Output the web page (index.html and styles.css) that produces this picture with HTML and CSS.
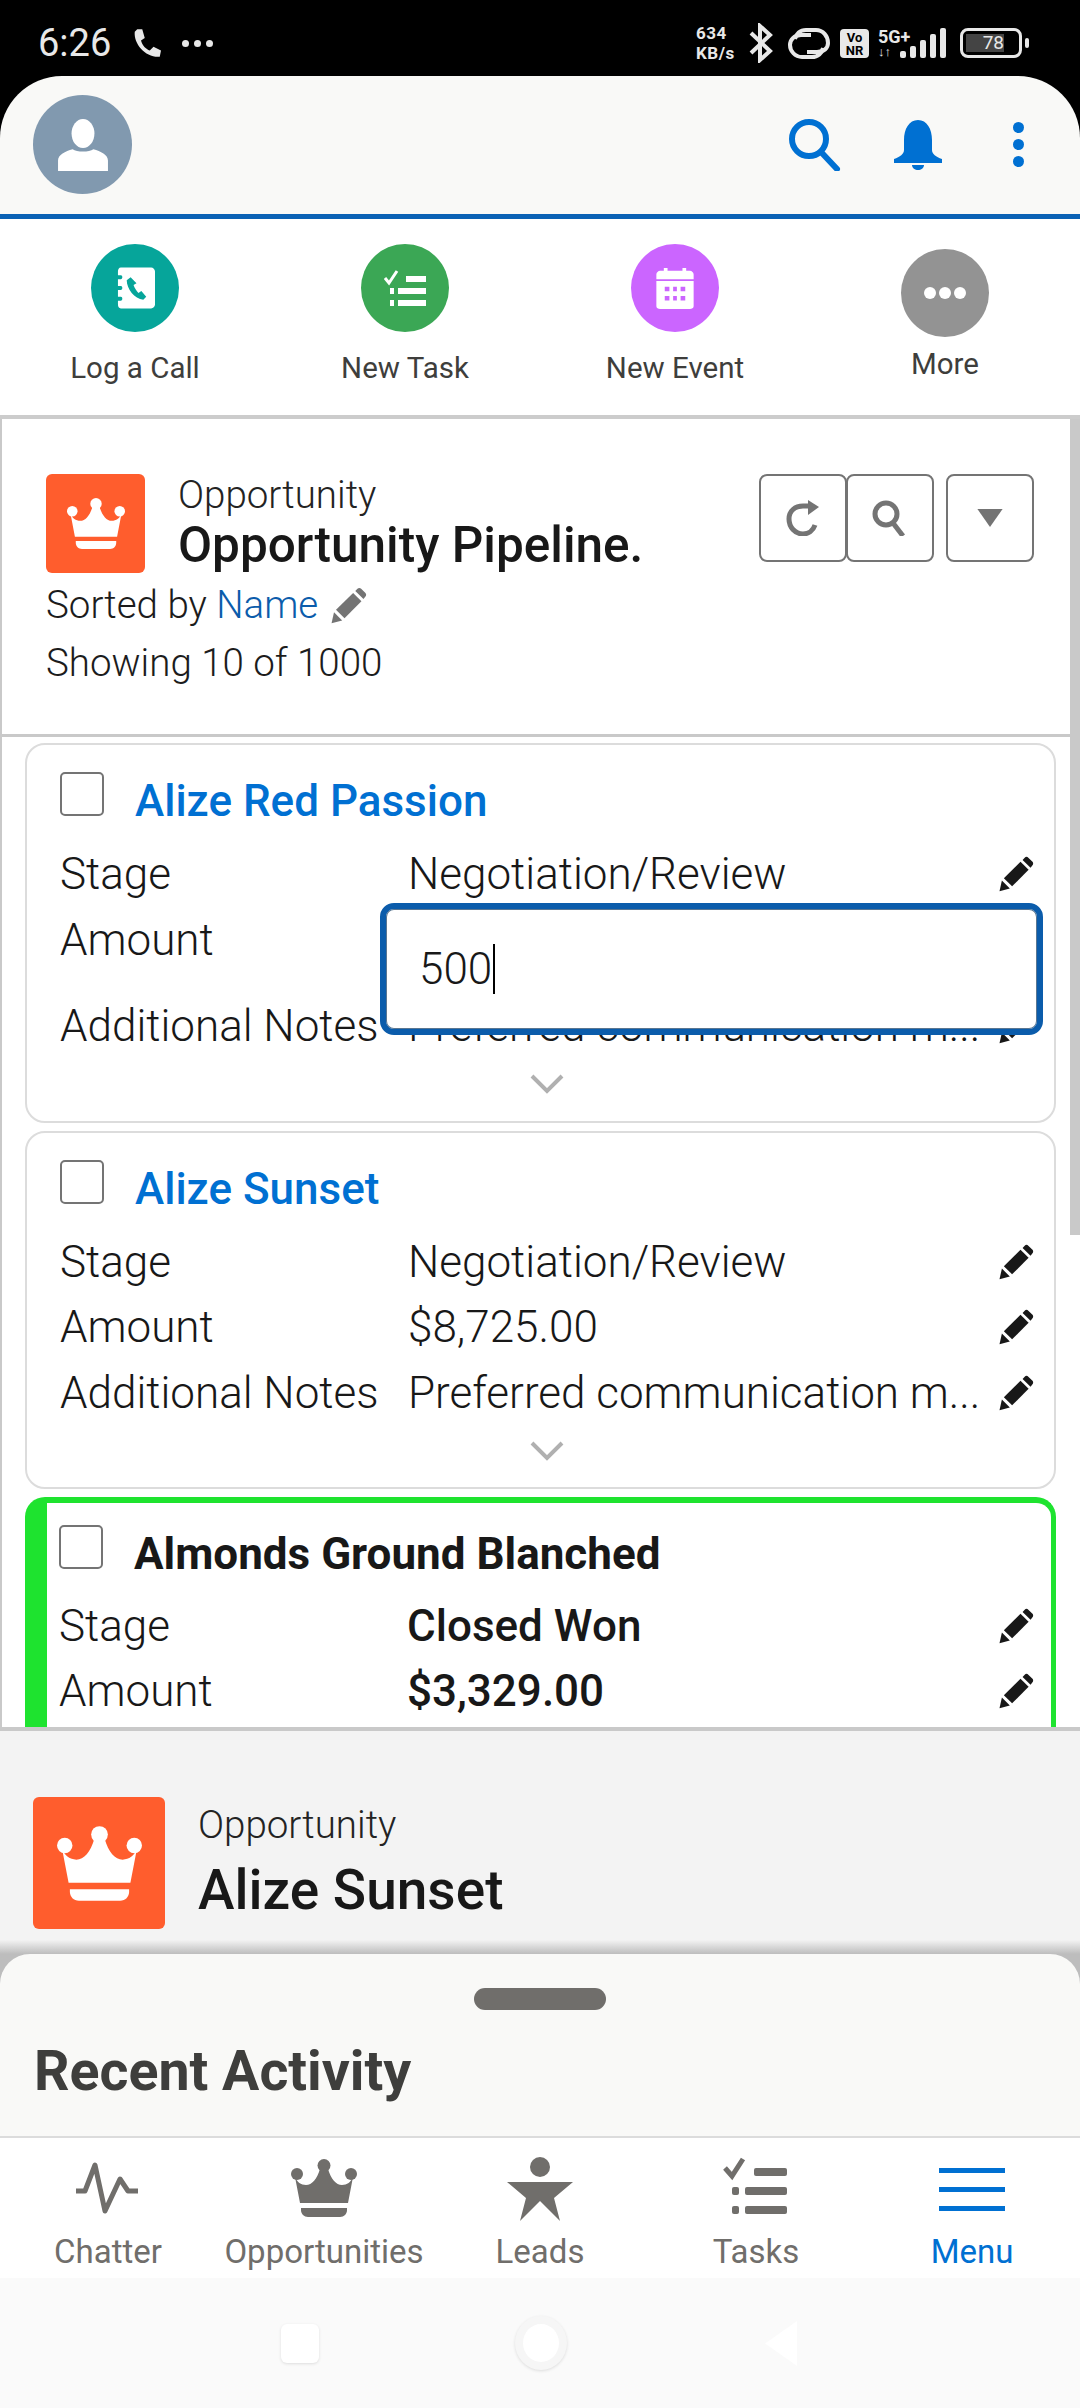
FILE: index.html
```html
<!DOCTYPE html>
<html lang="en">

<head>
    <meta charset="UTF-8">
    <meta name="viewport" content="width=device-width, initial-scale=1.0">
    <title>Opportunity Pipeline</title>
    <link rel="stylesheet" href="styles.css">
</head>

<body>
    <svg class="defs" width="0" height="0">
        <symbol id="pencil" viewBox="0 0 24 24">
            <path d="M1 23.5 2.6 16.4 7.9 21.7Z" />
            <path d="M3.9 14.8 15 3.9 20.4 9.2 9.4 20.2Z" />
            <path d="M16.4 2.6 17.8 1.1C18.5.4 19.5.4 20.2 1.1L23 3.9C23.6 4.6 23.6 5.6 23 6.2L21.7 7.8Z" />
        </symbol>
        <symbol id="crown" viewBox="0 0 66 58">
            <ellipse cx="33" cy="6.5" rx="6.5" ry="6.5" />
            <circle cx="6" cy="15" r="6" />
            <circle cx="60" cy="15" r="6" />
            <path d="M4 18C6 23 10 26 15 26 21 26 26 20 29 10H37C40 20 45 26 51 26 56 26 60 23 62 18L57 44H9Z" />
            <path d="M10 49H56V51C56 55 53 58 49 58H17C13 58 10 55 10 51Z" />
        </symbol>
    </svg>

    <div class="status">
        <div class="status-left">
            <span class="time">6:26</span>
            <svg class="call" viewBox="0 0 24 24">
                <path d="M5 1 9 1 11 8 8 10C9 14 12 17 15 18L18 15 24 18 23 23C12 24 2 13 3 3Z" />
            </svg>
            <span class="more-dots"><i></i><i></i><i></i></span>
        </div>
        <div class="status-right">
            <span class="speed">634<br>KB/s</span>
            <svg class="bt" viewBox="0 0 26 40">
                <path d="M3 10 22 28 12 37V3L22 12 3 30" />
            </svg>
            <svg class="link" viewBox="0 0 44 33">
                <path d="M24 8H14C7 8 3 13 3 18 3 24 8 30 15 30H25C31 30 35 26 36 21" />
                <path d="M20 25H30C37 25 41 21 41 16 41 9 36 3 29 3H19C13 3 9 7 8 12" />
            </svg>
            <span class="vonr">Vo<br>NR</span>
            <span class="net">
                <span class="net-label">5G+</span>
                <span class="net-arrows">↓↑</span>
            </span>
            <span class="signal">
                <i class="s1"></i><i class="s2"></i><i class="s3"></i><i class="s4"></i><i class="s5"></i>
            </span>
            <span class="battery"><span class="battery-fill">78</span></span>
            <span class="battery-tip"></span>
        </div>
    </div>

    <header class="app-header">
        <div class="avatar">
            <svg viewBox="0 0 50 50">
                <ellipse cx="25" cy="14" rx="11" ry="14" />
                <path d="M1 50V40C1 34 8 31 15 29 19 32 31 32 35 29 42 31 49 34 49 40V50Z" />
            </svg>
        </div>
        <div class="header-actions">
            <svg class="icon-search" viewBox="0 0 52 52">
                <circle cx="20" cy="20" r="17" />
                <path d="M32 33 48 50" />
            </svg>
            <svg class="icon-bell" viewBox="0 0 48 50">
                <path d="M24 0C33 0 38 9 38 20V30C38 34 42 37 48 39V43H0V39C6 37 10 34 10 30V20C10 9 15 0 24 0Z" />
                <path d="M18 45H30C30 48 27 50 24 50 21 50 18 48 18 45Z" />
            </svg>
            <div class="icon-kebab"><i></i><i></i><i></i></div>
        </div>
    </header>

    <nav class="quick">
        <a class="quick-item">
            <span class="quick-icon teal">
                <svg viewBox="0 0 40 42">
                    <path fill-rule="evenodd" d="M5 0H36C38 0 40 2 40 4V38C40 40 38 42 36 42H5C3 42 2 40 2 38V34H5C7 34 7 30 5 30H2V23H5C7 23 7 19 5 19H2V12H5C7 12 7 8 5 8H2V4C2 2 3 0 5 0ZM15 10 11 13C11 22 19 32 28 33L31 30 26 24 23 26C21 24 19 21 18 18L21 16Z" />
                </svg>
            </span>
            <span class="quick-label">Log a Call</span>
        </a>
        <a class="quick-item">
            <span class="quick-icon green">
                <svg viewBox="0 0 42 37">
                    <path class="tick" d="M1 8 5 13 13 1" />
                    <rect x="22" y="6" width="20" height="6" />
                    <rect x="6" y="18" width="4" height="6" />
                    <rect x="14" y="18" width="28" height="6" />
                    <rect x="6" y="30" width="4" height="6" />
                    <rect x="14" y="30" width="28" height="6" />
                </svg>
            </span>
            <span class="quick-label">New Task</span>
        </a>
        <a class="quick-item">
            <span class="quick-icon purple">
                <svg viewBox="0 0 40 44">
                    <path d="M8 0H12V3H28V0H32V3H36C38 3 40 5 40 7V12H0V7C0 5 2 3 4 3H8Z" />
                    <path fill-rule="evenodd" d="M0 14H40V41C40 43 38 44 36 44H4C2 44 0 43 0 41ZM9 20V25H14V20ZM18 20V25H22V20ZM26 20V25H31V20ZM9 30V35H14V30ZM18 30V35H22V30ZM26 30V35H31V30Z" />
                </svg>
            </span>
            <span class="quick-label">New Event</span>
        </a>
        <a class="quick-item quick-more">
            <span class="quick-icon gray">
                <span class="three-dots"><i></i><i></i><i></i></span>
            </span>
            <span class="quick-label">More</span>
        </a>
    </nav>

    <main class="panel">
        <span class="scroll-thumb"></span>
        <section class="list-head">
            <div class="list-top">
                <div class="record-icon"><svg><use href="#crown" /></svg></div>
                <div class="list-title">
                    <p class="object-name">Opportunity</p>
                    <h1>Opportunity Pipeline.</h1>
                </div>
                <div class="list-buttons">
                    <button class="btn">
                        <svg viewBox="0 0 36 36" class="btn-stroke">
                            <path d="M30 25C28 31 23 34 18 34 10 34 4 27 4 19 4 11 10 6 18 6H27" />
                            <path class="solid" d="M23 0 34 7 23 15Z" />
                        </svg>
                    </button>
                    <button class="btn">
                        <svg viewBox="0 0 36 36" class="btn-stroke">
                            <circle cx="14" cy="14" r="11" />
                            <path d="M21 23 31 36" />
                        </svg>
                    </button>
                    <button class="btn btn-menu">
                        <svg viewBox="0 0 30 20"><path d="M1 0H29L15 20Z" /></svg>
                    </button>
                </div>
            </div>
            <p class="meta sorted">Sorted by <a>Name</a>
                <svg class="meta-pencil"><use href="#pencil" /></svg>
            </p>
            <p class="meta showing">Showing 10 of 1000</p>
        </section>

        <article class="card card-first">
            <div class="card-title"><span class="check"></span><a>Alize Red Passion</a></div>
            <div class="row"><span class="label">Stage</span><span class="value">Negotiation/Review</span><svg class="pencil"><use href="#pencil" /></svg></div>
            <div class="row row-edit"><span class="label">Amount</span></div>
            <div class="row"><span class="label">Additional Notes</span><span class="value">Preferred communication m...</span><svg class="pencil"><use href="#pencil" /></svg></div>
            <div class="chevron"><svg viewBox="0 0 34 20"><path d="M2 2 17 17 32 2" /></svg></div>
            <div class="edit-box"><span class="edit-text">500</span><span class="caret"></span></div>
        </article>

        <article class="card">
            <div class="card-title"><span class="check"></span><a>Alize Sunset</a></div>
            <div class="row"><span class="label">Stage</span><span class="value">Negotiation/Review</span><svg class="pencil"><use href="#pencil" /></svg></div>
            <div class="row"><span class="label">Amount</span><span class="value">$8,725.00</span><svg class="pencil"><use href="#pencil" /></svg></div>
            <div class="row"><span class="label">Additional Notes</span><span class="value">Preferred communication m...</span><svg class="pencil"><use href="#pencil" /></svg></div>
            <div class="chevron"><svg viewBox="0 0 34 20"><path d="M2 2 17 17 32 2" /></svg></div>
        </article>

        <article class="card card-won">
            <div class="card-title"><span class="check"></span><strong>Almonds Ground Blanched</strong></div>
            <div class="row"><span class="label">Stage</span><strong class="value">Closed Won</strong><svg class="pencil"><use href="#pencil" /></svg></div>
            <div class="row"><span class="label">Amount</span><strong class="value">$3,329.00</strong><svg class="pencil"><use href="#pencil" /></svg></div>
        </article>
    </main>

    <section class="preview">
        <div class="record-icon record-icon-big"><svg><use href="#crown" /></svg></div>
        <div class="preview-text">
            <p class="object-name">Opportunity</p>
            <h2>Alize Sunset</h2>
        </div>
    </section>

    <section class="sheet">
        <span class="handle"></span>
        <h3>Recent Activity</h3>
    </section>

    <nav class="tabs">
        <a class="tab">
            <svg viewBox="0 0 66 66" class="pulse"><path d="M1 34H10L20 8 30 54 45 22 53 34H63" /></svg>
            <span>Chatter</span>
        </a>
        <a class="tab">
            <span class="crown-box"><svg viewBox="0 0 66 58"><use href="#crown" /></svg></span>
            <span>Opportunities</span>
        </a>
        <a class="tab">
            <svg viewBox="0 0 66 66">
                <ellipse cx="33" cy="10" rx="10" ry="10" />
                <path d="M0 25H66L47 41 53 64 33 44 13 64 19 41Z" />
            </svg>
            <span>Leads</span>
        </a>
        <a class="tab">
            <svg viewBox="0 0 66 66">
                <path class="tab-tick" d="M2 11 9 19 20 2" />
                <rect x="31" y="11" width="33" height="8" rx="2" />
                <rect x="9" y="30" width="7" height="8" rx="2" />
                <rect x="22" y="30" width="42" height="8" rx="2" />
                <rect x="9" y="49" width="7" height="8" rx="2" />
                <rect x="22" y="49" width="42" height="8" rx="2" />
            </svg>
            <span>Tasks</span>
        </a>
        <a class="tab tab-active">
            <span class="burger"><i></i><i></i><i></i></span>
            <span>Menu</span>
        </a>
    </nav>

    <div class="softkeys">
        <span class="key-square"></span>
        <span class="key-circle"></span>
        <svg class="key-back" viewBox="0 0 36 50"><path d="M35 1V49L1 25Z" /></svg>
    </div>
</body>

</html>
```

FILE: styles.css
```css
html {
    box-sizing: border-box;
    font-family: Roboto, "Liberation Sans", sans-serif;
}

*,
*:before,
*:after {
    box-sizing: inherit;
}

body {
    margin: 0;
    width: 1080px;
    height: 2408px;
    overflow: hidden;
    background-color: #000;
    display: flex;
    flex-direction: column;
    color: #181818;
}

p,
h1,
h2,
h3 {
    margin: 0;
}

.defs {
    position: absolute;
}

/* status bar */
.status {
    height: 76px;
    flex-shrink: 0;
    padding: 10px 51px 0 38px;
    display: flex;
    justify-content: space-between;
    align-items: center;
    color: #e8e8e8;
}

.status-left,
.status-right {
    display: flex;
    align-items: center;
}

.time {
    font-size: 38px;
    width: 93px;
}

.call {
    width: 30px;
    height: 30px;
    fill: #e8e8e8;
    margin-right: 21px;
}

.more-dots {
    display: flex;
    gap: 5px;
}

.more-dots i {
    display: block;
    width: 7px;
    height: 7px;
    border-radius: 50%;
    background-color: #e8e8e8;
}

.speed {
    font-size: 17px;
    line-height: 20px;
    font-weight: 700;
    letter-spacing: .5px;
    width: 44px;
    margin-right: 8px;
    white-space: nowrap;
}

.bt {
    width: 26px;
    height: 40px;
    fill: none;
    stroke: #e8e8e8;
    stroke-width: 4;
    margin-right: 13px;
}

.link {
    width: 44px;
    height: 33px;
    fill: none;
    stroke: #e8e8e8;
    stroke-width: 4;
    margin-right: 9px;
}

.vonr {
    width: 29px;
    height: 29px;
    border-radius: 4px;
    background-color: #e8e8e8;
    color: #000;
    font-size: 13px;
    line-height: 13px;
    font-weight: 700;
    text-align: center;
    padding-top: 2px;
    margin-right: 9px;
}

.net {
    display: flex;
    flex-direction: column;
    width: 22px;
    font-size: 18px;
    font-weight: 700;
    line-height: 17px;
    white-space: nowrap;
}

.net-arrows {
    font-size: 13px;
    line-height: 13px;
}

.signal {
    display: flex;
    align-items: flex-end;
    gap: 4px;
    height: 30px;
    margin-right: 14px;
}

.signal i {
    display: block;
    width: 6px;
    background-color: #e8e8e8;
    border-radius: 2px;
}

.s1 { height: 7px; }
.s2 { height: 12px; }
.s3 { height: 18px; }
.s4 { height: 24px; }
.s5 { height: 30px; }

.battery {
    width: 62px;
    height: 30px;
    border: 3px solid #e8e8e8;
    border-radius: 8px;
    padding: 3px;
    display: flex;
}

.battery-fill {
    width: 38px;
    background-color: #444;
    color: #e8e8e8;
    font-size: 19px;
    line-height: 18px;
    text-align: right;
}

.battery-tip {
    width: 4px;
    height: 10px;
    background-color: #e8e8e8;
    margin-left: 3px;
    border-radius: 2px;
}

/* app header */
.app-header {
    height: 143px;
    flex-shrink: 0;
    padding: 19px 56px 0 33px;
    background-color: #f9f9f7;
    border-bottom: 5px solid #0b62b5;
    border-radius: 62px 62px 0 0;
    display: flex;
    justify-content: space-between;
    align-items: flex-start;
}

.avatar {
    width: 99px;
    height: 99px;
    border-radius: 50%;
    background-color: #8199af;
    display: flex;
    justify-content: center;
    align-items: center;
}

.avatar svg {
    width: 52px;
    height: 52px;
    fill: #fff;
}

.header-actions {
    display: flex;
    align-items: center;
    height: 99px;
}

.icon-search {
    width: 52px;
    height: 52px;
    fill: none;
    stroke: #0070d2;
    stroke-width: 6;
    stroke-linecap: round;
    margin-right: 53px;
}

.icon-bell {
    width: 48px;
    height: 50px;
    fill: #0070d2;
    margin-right: 71px;
}

.icon-kebab {
    display: flex;
    flex-direction: column;
    gap: 6px;
}

.icon-kebab i {
    display: block;
    width: 11px;
    height: 11px;
    border-radius: 50%;
    background-color: #0070d2;
}

/* quick actions */
.quick {
    height: 200px;
    flex-shrink: 0;
    background-color: #fff;
    border-bottom: 4px solid #ccc;
    display: grid;
    grid-template-columns: repeat(4, 1fr);
    padding-top: 25px;
}

.quick-item {
    display: flex;
    flex-direction: column;
    align-items: center;
}

.quick-icon {
    width: 88px;
    height: 88px;
    border-radius: 50%;
    display: flex;
    justify-content: center;
    align-items: center;
}

.quick-icon svg {
    fill: #fff;
}

.teal svg {
    width: 39px;
    height: 42px;
}

.green svg {
    width: 42px;
    height: 37px;
}

.purple svg {
    width: 38px;
    height: 41px;
}

.quick-icon .tick {
    fill: none;
    stroke: #fff;
    stroke-width: 3;
}

.teal { background-color: #06a59a; }
.green { background-color: #3ba755; }
.purple { background-color: #cb65ff; }
.gray { background-color: #939393; }

.quick-label {
    margin-top: 18px;
    font-size: 29.5px;
    line-height: 36px;
    color: #3e3e3c;
}

.quick-more {
    padding-top: 5px;
}

.quick-more .quick-label {
    margin-top: 9px;
}

.three-dots {
    display: flex;
    gap: 3px;
}

.three-dots i {
    display: block;
    width: 12px;
    height: 12px;
    border-radius: 50%;
    background-color: #fff;
}

/* list panel */
.panel {
    position: relative;
    height: 1308px;
    flex-shrink: 0;
    overflow: hidden;
    background-color: #fff;
    border-left: 2px solid #c9c9c9;
}

.scroll-thumb {
    position: absolute;
    top: 0;
    right: 0;
    width: 10px;
    height: 816px;
    background-color: #c9c9c9;
}

.list-head {
    height: 318px;
    padding: 55px 0 0 44px;
    border-bottom: 3px solid #c9c9c9;
}

.list-top {
    display: flex;
    align-items: flex-start;
    height: 112px;
}

.record-icon {
    width: 99px;
    height: 99px;
    flex-shrink: 0;
    border-radius: 6px;
    background-color: #ff5d2d;
    display: flex;
    justify-content: center;
    align-items: center;
}

.record-icon svg {
    width: 58px;
    height: 51px;
    fill: #fff;
}

.list-title {
    margin-left: 33px;
    flex-grow: 1;
}

.object-name {
    font-size: 38.5px;
    line-height: 42px;
    font-weight: 300;
    color: #232323;
}

h1 {
    margin-top: 1px;
    font-size: 49.5px;
    line-height: 56px;
    font-weight: 500;
    white-space: nowrap;
}

.list-buttons {
    display: flex;
    margin-right: 46px;
}

.btn {
    width: 88px;
    height: 88px;
    padding: 0;
    margin-right: -1px;
    background-color: #fff;
    border: 2px solid #747474;
    border-radius: 8px;
    display: flex;
    justify-content: center;
    align-items: center;
}

.btn svg {
    width: 36px;
    height: 36px;
}

.btn-stroke {
    fill: none;
    stroke: #747474;
    stroke-width: 5;
}

.btn-stroke .solid {
    fill: #747474;
    stroke: none;
}

.btn-menu {
    margin: 0 0 0 13px;
}

.btn-menu svg {
    width: 28px;
    height: 18px;
    fill: #747474;
}

.meta {
    font-size: 38.5px;
    line-height: 42px;
    font-weight: 300;
    color: #1c1c1c;
    display: flex;
    align-items: center;
    white-space: pre;
}

.sorted {
    margin-top: -2px;
}

.sorted a {
    color: #0b5cab;
}

.meta-pencil {
    width: 37px;
    height: 37px;
    fill: #747474;
    margin-left: 12px;
}

.showing {
    margin-top: 16px;
}

/* opportunity cards */
.card {
    position: relative;
    margin: 8px 24px 0 23px;
    height: 358px;
    padding: 27px 20px 0 33px;
    border: 2px solid #dcdcdc;
    border-radius: 20px;
    background-color: #fff;
}

.card-first {
    height: 380px;
    margin-top: 6px;
}

.card-won {
    height: 300px;
    padding: 22px 17px 0 12px;
    border-width: 6px 5px 0 22px;
    border-color: #1ee32f;
}

.card-title {
    display: flex;
    align-items: flex-start;
    height: 69px;
    font-size: 44px;
    line-height: 58px;
    font-weight: 500;
}

.card-won .card-title {
    height: 68px;
}

.card-title a {
    color: #0070d2;
}

.check {
    width: 44px;
    height: 44px;
    flex-shrink: 0;
    margin-right: 31px;
    background-color: #fff;
    border: 2px solid #747474;
    border-radius: 5px;
}

.row {
    display: flex;
    align-items: center;
    height: 65.5px;
    font-size: 44px;
    font-weight: 300;
}

.row-edit {
    align-items: flex-start;
    height: 87px;
    padding-top: 7px;
}

.label {
    width: 348px;
    flex-shrink: 0;
    white-space: nowrap;
}

.value {
    flex-grow: 1;
    width: 0;
    white-space: nowrap;
}

strong.value {
    font-weight: 500;
}

.pencil {
    width: 36px;
    height: 36px;
    flex-shrink: 0;
    fill: #181818;
}

.chevron {
    display: flex;
    justify-content: center;
    padding-top: 15px;
}

.chevron svg {
    width: 34px;
    height: 20px;
    fill: none;
    stroke: #b0b0b0;
    stroke-width: 4;
}

.edit-box {
    position: absolute;
    left: 353px;
    right: 11px;
    top: 158px;
    height: 132px;
    background-color: #fff;
    border: 6px solid #0b5cab;
    box-shadow: inset 0 0 0 1px #5a7691;
    border-radius: 14px;
    padding-left: 33px;
    display: flex;
    align-items: center;
    font-size: 44px;
    font-weight: 300;
}

.caret {
    width: 2px;
    height: 50px;
    margin-left: 1px;
    background-color: #000;
}

/* record preview, runs on under the round corners of the sheet */
.preview {
    height: 265px;
    flex-shrink: 0;
    padding: 66px 0 0 33px;
    border-top: 4px solid #c9c9c9;
    background: linear-gradient(#f3f3f3 209px, #bdbdbd 223px);
    display: flex;
    align-items: flex-start;
}

.record-icon-big {
    width: 132px;
    height: 132px;
    margin-right: 33px;
}

.record-icon-big svg {
    width: 85px;
    height: 75px;
}

.preview-text {
    padding-top: 7px;
}

h2 {
    margin-top: 13px;
    font-size: 55px;
    line-height: 62px;
    font-weight: 500;
}

/* bottom sheet */
.sheet {
    height: 184px;
    flex-shrink: 0;
    margin-top: -38px;
    background-color: #f9f9f7;
    border-bottom: 2px solid #dcdcdc;
    border-radius: 30px 30px 0 0;
    display: flex;
    flex-direction: column;
    padding: 34px 0 0 34px;
}

.handle {
    width: 132px;
    height: 22px;
    border-radius: 11px;
    background-color: #706e6b;
    margin-left: 440px;
}

h3 {
    margin-top: 32px;
    font-size: 55.5px;
    line-height: 60px;
    font-weight: 700;
    color: #3e3e3c;
}

/* tab bar */
.tabs {
    height: 140px;
    flex-shrink: 0;
    background-color: #fff;
    display: grid;
    grid-template-columns: repeat(5, 1fr);
    padding-top: 19px;
}

.tab {
    display: flex;
    flex-direction: column;
    align-items: center;
    font-size: 33px;
    line-height: 38px;
    color: #706e6b;
}

.tab svg {
    width: 66px;
    height: 66px;
    fill: #706e6b;
    margin-bottom: 10px;
}

.crown-box {
    height: 76px;
    padding-top: 2px;
}

.crown-box svg {
    height: 58px;
}

.tab svg.pulse {
    fill: none;
    stroke: #706e6b;
    stroke-width: 5;
    stroke-linejoin: round;
}

.tab .tab-tick {
    fill: none;
    stroke: #706e6b;
    stroke-width: 5;
}

.tab-active {
    color: #0070d2;
}

.burger {
    width: 66px;
    height: 66px;
    margin-bottom: 10px;
    padding-top: 11px;
    display: flex;
    flex-direction: column;
    gap: 14px;
}

.burger i {
    display: block;
    height: 5px;
    background-color: #0070d2;
}

/* android keys */
.softkeys {
    flex-grow: 1;
    background-color: #fafafa;
    display: flex;
    justify-content: center;
    align-items: center;
    gap: 196px;
}

.key-square {
    width: 38px;
    height: 39px;
    border-radius: 6px;
    background-color: #fff;
    box-shadow: 0 1px 3px #ddd;
}

.key-circle {
    width: 52px;
    height: 54px;
    border-radius: 50%;
    background-color: #fff;
    border: 8px solid #f6f6f6;
    box-shadow: 0 1px 3px #ddd;
}

.key-back {
    width: 36px;
    height: 47px;
    fill: #fff;
}
```
